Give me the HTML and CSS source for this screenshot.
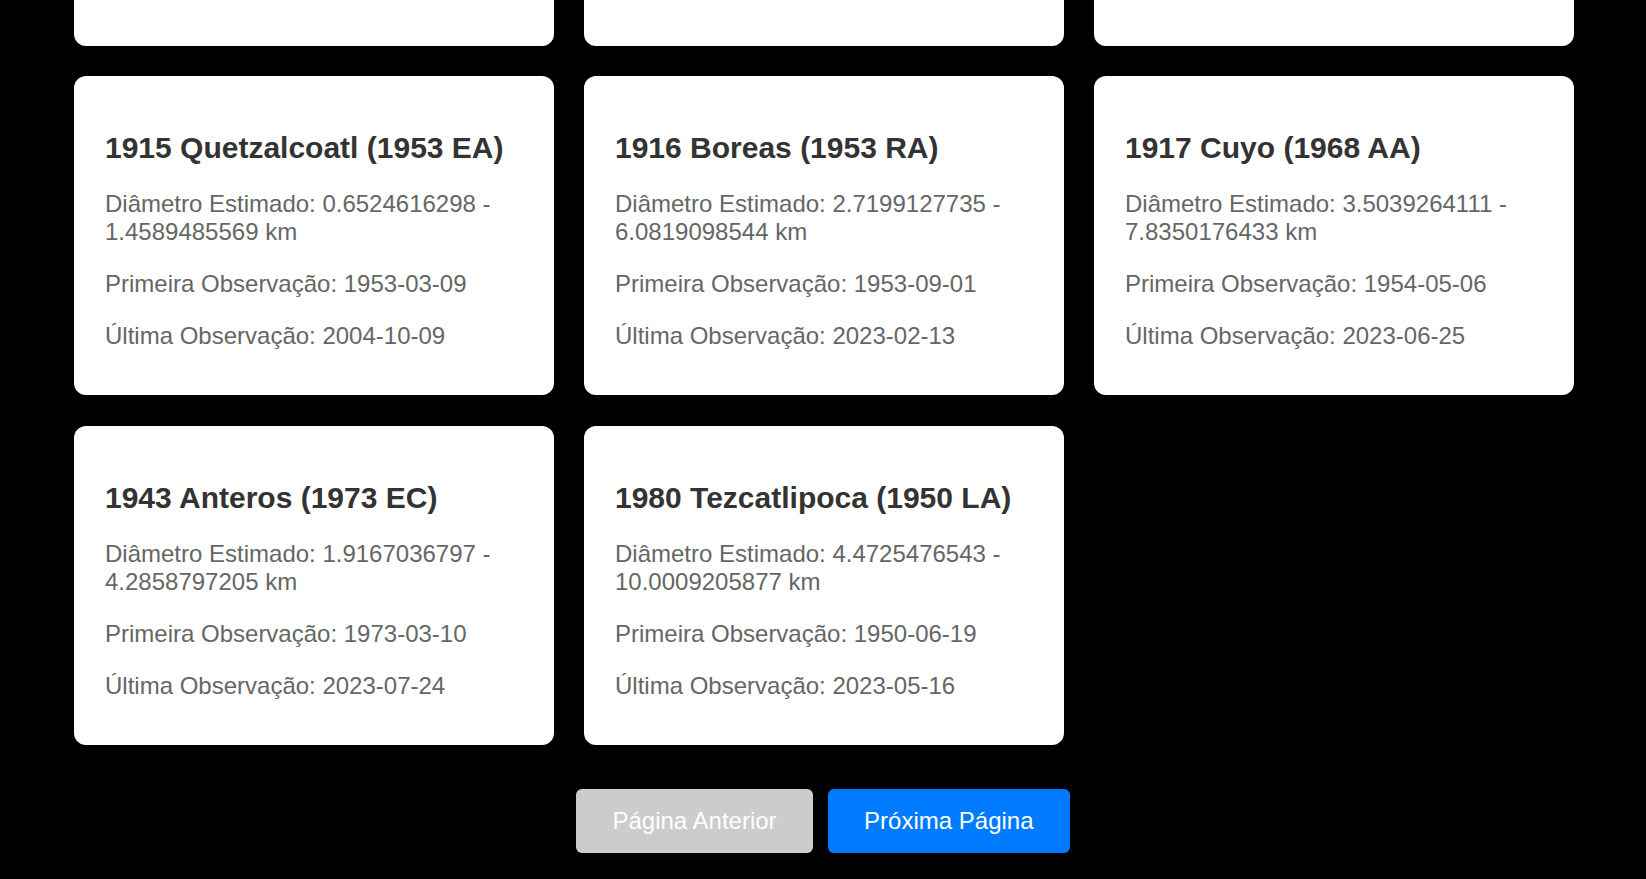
FILE: index.html
```html
<!DOCTYPE html>
<html lang="pt-BR">
<head>
<meta charset="utf-8">
<title>Asteroides</title>
<link rel="stylesheet" href="styles.css">
</head>
<body>
<main class="page">
  <section class="grid">
    <div class="card card-cut"></div>
    <div class="card card-cut"></div>
    <div class="card card-cut"></div>

    <article class="card">
      <h2 class="card-title">1915 Quetzalcoatl (1953 EA)</h2>
      <p class="card-text">Diâmetro Estimado: 0.6524616298 - 1.4589485569 km</p>
      <p class="card-text">Primeira Observação: 1953-03-09</p>
      <p class="card-text">Última Observação: 2004-10-09</p>
    </article>
    <article class="card">
      <h2 class="card-title">1916 Boreas (1953 RA)</h2>
      <p class="card-text">Diâmetro Estimado: 2.7199127735 - 6.0819098544 km</p>
      <p class="card-text">Primeira Observação: 1953-09-01</p>
      <p class="card-text">Última Observação: 2023-02-13</p>
    </article>
    <article class="card">
      <h2 class="card-title">1917 Cuyo (1968 AA)</h2>
      <p class="card-text">Diâmetro Estimado: 3.5039264111 - 7.8350176433 km</p>
      <p class="card-text">Primeira Observação: 1954-05-06</p>
      <p class="card-text">Última Observação: 2023-06-25</p>
    </article>
    <article class="card">
      <h2 class="card-title">1943 Anteros (1973 EC)</h2>
      <p class="card-text">Diâmetro Estimado: 1.9167036797 - 4.2858797205 km</p>
      <p class="card-text">Primeira Observação: 1973-03-10</p>
      <p class="card-text">Última Observação: 2023-07-24</p>
    </article>
    <article class="card">
      <h2 class="card-title">1980 Tezcatlipoca (1950 LA)</h2>
      <p class="card-text">Diâmetro Estimado: 4.4725476543 - 10.0009205877 km</p>
      <p class="card-text">Primeira Observação: 1950-06-19</p>
      <p class="card-text">Última Observação: 2023-05-16</p>
    </article>
  </section>

  <nav class="pager">
    <button class="btn btn-disabled" disabled>Página Anterior</button>
    <button class="btn btn-primary">Próxima Página</button>
  </nav>
</main>
</body>
</html>
```

FILE: styles.css
```css
html, body {
  margin: 0;
  padding: 0;
  background: #000;
}

body {
  font-family: "Liberation Sans", Arial, sans-serif;
}

.page {
  padding-bottom: 26px;
}

.grid {
  display: grid;
  grid-template-columns: repeat(3, 480px);
  column-gap: 30px;
  row-gap: 30.5px;
  margin-left: 74px;
  align-items: start;
}

.card {
  background: #fff;
  border-radius: 12px;
  padding: 30px 31px 21.7px;
  box-sizing: border-box;
}

.card-cut {
  height: 45.5px;
  padding: 0;
  border-radius: 0 0 12px 12px;
}

.card-title {
  margin: 24.9px 0;
  font-size: 30px;
  font-weight: bold;
  color: #333;
  line-height: normal;
}

.card-text {
  margin: 24px 0;
  font-size: 24px;
  color: #666;
  line-height: normal;
}

.pager {
  display: flex;
  justify-content: center;
  gap: 15.5px;
  margin-top: 44px;
}

.btn {
  font-family: "Liberation Sans", Arial, sans-serif;
  font-size: 24px;
  line-height: normal;
  color: #fff;
  border: none;
  border-radius: 6px;
  padding: 18px 36px;
  margin: 0;
}

.btn-disabled {
  background: #ccc;
}

.btn-primary {
  background: #007bff;
}
```
